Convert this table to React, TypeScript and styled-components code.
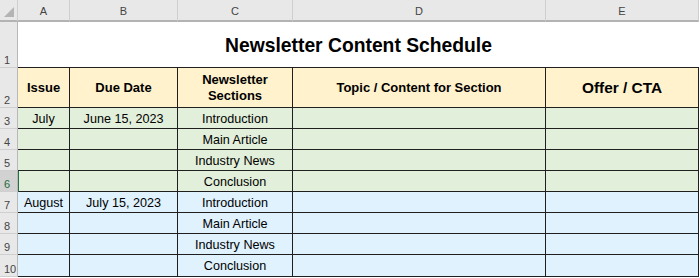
import { Fragment } from "react";
import styled, { createGlobalStyle } from "styled-components";

const Global = createGlobalStyle`
  body {
    margin: 0;
    background: #ffffff;
    font-family: "Liberation Sans", Arial, sans-serif;
  }
`;

const Sheet = styled.div`
  display: grid;
  grid-template-columns: 18px 52px 108px 115px 253px 153px;
  grid-template-rows: 22px 46px 40px repeat(7, 21px) 22px;
  width: 699px;
`;

const Corner = styled.div`
  background: #e8e8e8;
  border-right: 1px solid #cfcfcf;
  border-bottom: 2px solid #b3b3b3;
  box-sizing: border-box;
  position: relative;
  &::after {
    content: "";
    position: absolute;
    right: 3px;
    bottom: 3px;
    width: 0;
    height: 0;
    border-left: 10px solid transparent;
    border-bottom: 10px solid #b4b4b4;
  }
`;

const ColHead = styled.div`
  background: #e8e8e8;
  border-right: 1px solid #cfcfcf;
  border-bottom: 2px solid #b3b3b3;
  box-sizing: border-box;
  display: flex;
  align-items: center;
  justify-content: center;
  font-size: 11px;
  color: #444;
  padding-top: 2px;
`;

const RowHead = styled.div<{ $active?: boolean }>`
  background: ${(p) => (p.$active ? "#d2d2d2" : "#e8e8e8")};
  border-bottom: 1px solid #cfcfcf;
  border-right: 1px solid #b8b8b8;
  box-sizing: border-box;
  display: flex;
  align-items: flex-end;
  padding-left: 4px;
  padding-bottom: 1px;
  font-size: 11px;
  color: ${(p) => (p.$active ? "#1e6b3c" : "#444")};
`;

const TitleCell = styled.div`
  grid-column: 2 / span 5;
  border-bottom: 1px solid #1f1f1f;
  box-sizing: border-box;
  display: flex;
  align-items: center;
  justify-content: center;
  font-size: 19.3px;
  font-weight: bold;
  color: #000;
  padding-top: 2px;
`;

const HeadCell = styled.div<{ $big?: boolean }>`
  background: #fff2cc;
  border-right: 1px solid #1f1f1f;
  border-bottom: 1px solid #1f1f1f;
  box-sizing: border-box;
  display: flex;
  align-items: center;
  justify-content: center;
  text-align: center;
  font-weight: bold;
  font-size: ${(p) => (p.$big ? "15.4px" : "13px")};
  line-height: 16px;
  color: #000;
`;

const DataCell = styled.div<{ $tone: "green" | "blue"; $active?: boolean }>`
  background: ${(p) => (p.$tone === "green" ? "#e2efda" : "#dff2fd")};
  border-right: 1px solid #1f1f1f;
  border-bottom: 1px solid #1f1f1f;
  border-left: ${(p) => (p.$active ? "1px solid #217346" : "none")};
  box-sizing: border-box;
  display: flex;
  align-items: center;
  justify-content: center;
  font-size: 12.6px;
  color: #000;
  padding-top: 1px;
`;

const cols = ["A", "B", "C", "D", "E"];

const rows = [
  { issue: "July", due: "June 15, 2023", section: "Introduction", tone: "green" },
  { issue: "", due: "", section: "Main Article", tone: "green" },
  { issue: "", due: "", section: "Industry News", tone: "green" },
  { issue: "", due: "", section: "Conclusion", tone: "green" },
  { issue: "August", due: "July 15, 2023", section: "Introduction", tone: "blue" },
  { issue: "", due: "", section: "Main Article", tone: "blue" },
  { issue: "", due: "", section: "Industry News", tone: "blue" },
  { issue: "", due: "", section: "Conclusion", tone: "blue" },
] as const;

export default function App() {
  return (
    <>
      <Global />
      <Sheet>
        <Corner />
        {cols.map((c) => (
          <ColHead key={c}>{c}</ColHead>
        ))}

        <RowHead>1</RowHead>
        <TitleCell>Newsletter Content Schedule</TitleCell>

        <RowHead>2</RowHead>
        <HeadCell>Issue</HeadCell>
        <HeadCell>Due Date</HeadCell>
        <HeadCell>
          Newsletter
          <br />
          Sections
        </HeadCell>
        <HeadCell>Topic / Content for Section</HeadCell>
        <HeadCell $big>Offer / CTA</HeadCell>

        {rows.map((r, i) => {
          const n = i + 3;
          const active = n === 6;
          return (
            <Fragment key={n}>
              <RowHead $active={active}>{n}</RowHead>
              <DataCell $tone={r.tone} $active={active}>
                {r.issue}
              </DataCell>
              <DataCell $tone={r.tone}>{r.due}</DataCell>
              <DataCell $tone={r.tone}>{r.section}</DataCell>
              <DataCell $tone={r.tone} />
              <DataCell $tone={r.tone} />
            </Fragment>
          );
        })}
      </Sheet>
    </>
  );
}
